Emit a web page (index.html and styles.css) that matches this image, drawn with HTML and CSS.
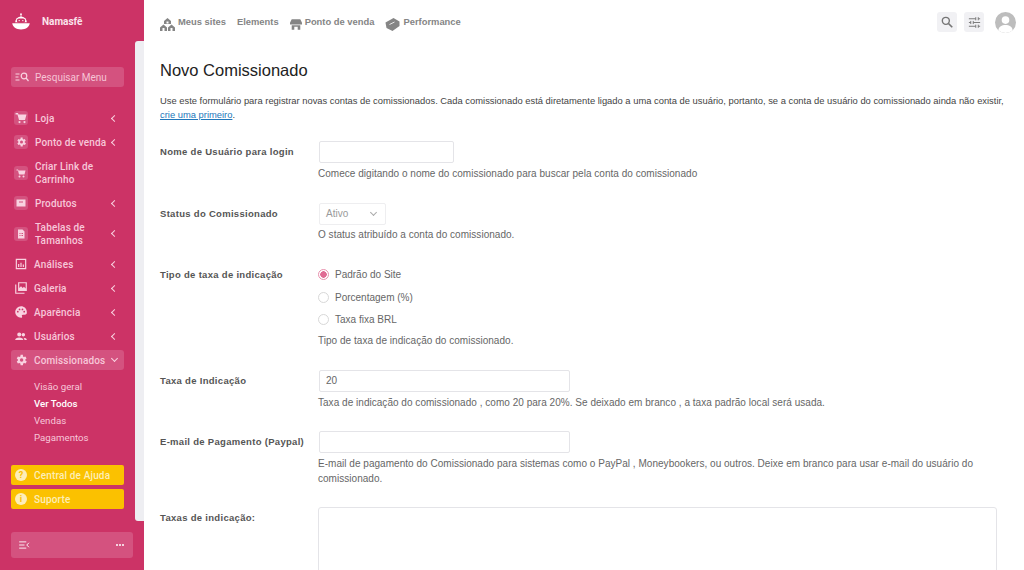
FILE: index.html
```html
<!DOCTYPE html>
<html lang="pt-BR">
<head>
    <meta charset="UTF-8">
    <title>Novo Comissionado</title>
    <link rel="stylesheet" href="styles.css">
</head>
<body>
<div class="app">
    <aside class="sidebar">
        <div class="side-col">
            <div class="brand">
                <svg class="brand-logo" viewBox="0 0 24 20"><circle cx="12" cy="1.200" r="1.100" fill="#fff"/><path d="M12 2v2.500" stroke="#fff" stroke-width="1"/><path d="M5 11a7 7 0 0 1 14 0z" fill="#fff"/><rect x="7" y="6.500" width="10" height="5" rx="2.500" fill="#cc3366"/><path d="M9 9h1.800M13.200 9H15" stroke="#fff" stroke-width="1"/><path d="M1.500 12h21c-.5 4-4.500 7.500-10.500 7.500S2 16 1.500 12z" fill="#fff"/></svg>
                <span>Namasfê</span>
            </div>
            <div class="side-search">
                <svg class="i-search" viewBox="0 0 14 10"><path d="M0 2h4M0 5h3M0 8h4" stroke="#f9d3e1" stroke-width="1"/><circle cx="8.500" cy="4" r="2.800" fill="none" stroke="#f9d3e1" stroke-width="1.200"/><path d="M10.500 6l2.500 3" stroke="#f9d3e1" stroke-width="1.200"/></svg>
                <span>Pesquisar Menu</span>
            </div>
            <nav class="menu">
                <a class="item"><span class="ico boxed"><svg viewBox="0 0 24 24"><path d="M1 2h5l1 3h16l-3 11H8L5 5H1zM9 18a2.200 2.200 0 1 1 0 4.400A2.200 2.200 0 0 1 9 18zm10 0a2.200 2.200 0 1 1 0 4.400 2.200 2.200 0 0 1 0-4.400z"/></svg></span><span class="txt">Loja</span><i class="chev"></i></a>
                <a class="item"><span class="ico boxed"><svg viewBox="0 0 24 24"><path d="M19.400 13a7.500 7.500 0 0 0 0-2l2.100-1.600-2-3.500-2.500 1a7.500 7.500 0 0 0-1.700-1L15.300 3.200h-4l-.4 2.700a7.500 7.500 0 0 0-1.700 1l-2.500-1-2 3.500L6.800 11a7.500 7.500 0 0 0 0 2l-2.100 1.600 2 3.500 2.500-1a7.500 7.500 0 0 0 1.700 1l.4 2.700h4l.4-2.700a7.500 7.500 0 0 0 1.700-1l2.500 1 2-3.500zM13 15a3 3 0 1 1 0-6 3 3 0 0 1 0 6z" fill-rule="evenodd"/></svg></span><span class="txt">Ponto de venda</span><i class="chev"></i></a>
                <a class="item"><span class="ico boxed"><svg viewBox="0 0 24 24"><path d="M3 5h3l1 2h14l-2 8H8L6 7H3zM9 17a2 2 0 1 1 0 4 2 2 0 0 1 0-4zm8 0a2 2 0 1 1 0 4 2 2 0 0 1 0-4z"/></svg></span><span class="txt">Criar Link de Carrinho</span></a>
                <a class="item"><span class="ico boxed"><svg viewBox="0 0 24 24"><path d="M3 5h18v14H3zM8 9v2h8V9z" fill-rule="evenodd"/></svg></span><span class="txt">Produtos</span><i class="chev"></i></a>
                <a class="item"><span class="ico boxed"><svg viewBox="0 0 24 24"><path d="M6 3h9l4 4v14H6zM9 10v2h2v-2zm4 0v2h3v-2zm-4 4v2h2v-2zm4 0v2h3v-2z" fill-rule="evenodd"/></svg></span><span class="txt">Tabelas de Tamanhos</span><i class="chev"></i></a>
                <a class="item"><span class="ico"><svg viewBox="0 0 24 24"><path d="M3 3h18v18H3zM5 5v14h14V5zM7 12h2v5H7zm4-2h2v7h-2zm4 3h2v4h-2z" fill-rule="evenodd"/></svg></span><span class="txt">Análises</span><i class="chev"></i></a>
                <a class="item"><span class="ico"><svg viewBox="0 0 24 24"><path d="M7 2h15v15H7zM9 4v8l3-3 3 3 2-2 3 3V4zM2 6h2v14h14v2H2z" fill-rule="evenodd"/></svg></span><span class="txt">Galeria</span><i class="chev"></i></a>
                <a class="item"><span class="ico"><svg viewBox="0 0 24 24"><path d="M12 2a10 10 0 1 0 0 20c2 0 2.500-1.500 1.700-2.700-.8-1.300 0-2.800 1.500-2.800H18a4 4 0 0 0 4-4.500C22 6 17.500 2 12 2zM6.500 13a1.500 1.500 0 1 1 0-3 1.500 1.500 0 0 1 0 3zm3-4a1.500 1.500 0 1 1 0-3 1.500 1.500 0 0 1 0 3zm5 0a1.500 1.500 0 1 1 0-3 1.500 1.500 0 0 1 0 3zm3 4a1.500 1.500 0 1 1 0-3 1.500 1.500 0 0 1 0 3z" fill-rule="evenodd"/></svg></span><span class="txt">Aparência</span><i class="chev"></i></a>
                <a class="item"><span class="ico"><svg viewBox="0 0 24 24"><path d="M9 6a3.500 3.500 0 1 1 0 7 3.500 3.500 0 0 1 0-7zm7 1a3 3 0 1 1 0 6 3 3 0 0 1 0-6zM2 19c0-3 3-4.500 7-4.500s7 1.500 7 4.500zm16 0c0-1.800-.7-3.200-2-4.200 3.500 0 6 1.300 6 4.200z"/></svg></span><span class="txt">Usuários</span><i class="chev"></i></a>
                <a class="item active"><span class="ico"><svg viewBox="0 0 24 24"><path d="M19.400 13a7.500 7.500 0 0 0 0-2l2.100-1.600-2-3.500-2.500 1a7.500 7.500 0 0 0-1.700-1L15.300 3.200h-4l-.4 2.700a7.500 7.500 0 0 0-1.700 1l-2.500-1-2 3.500L6.800 11a7.500 7.500 0 0 0 0 2l-2.100 1.600 2 3.500 2.500-1a7.500 7.500 0 0 0 1.700 1l.4 2.700h4l.4-2.700a7.500 7.500 0 0 0 1.700-1l2.500 1 2-3.500zM13 15a3 3 0 1 1 0-6 3 3 0 0 1 0 6z" fill-rule="evenodd"/></svg></span><span class="txt">Comissionados</span><i class="chev down"></i></a>
            </nav>
            <ul class="submenu">
                <li>Visão geral</li>
                <li class="current">Ver Todos</li>
                <li>Vendas</li>
                <li>Pagamentos</li>
            </ul>
            <div class="help-btns">
                <a class="yellow"><span class="dot">?</span>Central de Ajuda</a>
                <a class="yellow"><span class="dot">i</span>Suporte</a>
            </div>
            <div class="side-foot">
                <svg class="foot-ico" viewBox="0 0 12 9"><path d="M0 1h8M0 4.500h6M0 8h8" stroke="#fff" stroke-width="1"/><path d="M11 2L8.500 4.500 11 7" fill="none" stroke="#fff" stroke-width="1"/></svg>
                <span class="foot-dots"><b></b><b></b><b></b></span>
            </div>
        </div>
        <div class="side-scroll"></div>
    </aside>

    <main class="main">
        <header class="topbar">
            <a class="top-link"><svg class="top-ico" viewBox="0 0 15 13"><path d="M7.500 0L11 3v3H4V3zM3.500 6.500L7 9.500V13H0V9.500zM11.500 6.500L15 9.500V13H8V9.500z" fill="#858585"/><path d="M6.500 3.500h2v2h-2zM2.500 10h2v3h-2zM10.500 10h2v3h-2z" fill="#fff"/></svg>Meus sites</a>
            <a class="top-link">Elements</a>
            <a class="top-link"><svg class="top-ico small" viewBox="0 0 14 12"><path d="M2 0h10l2 4v2H0V4zM2 7h10v5H9V8.500H5V12H2z" fill="#858585"/></svg>Ponto de venda</a>
            <a class="top-link"><svg class="top-ico" viewBox="0 0 14 13"><path d="M0 4.500L8 0l6 3.500V8l-7 5-6-3z" fill="#858585"/><path d="M4 6.500l5-2.500" stroke="#fff" stroke-width=".8"/></svg>Performance</a>
            <div class="top-right">
                <span class="top-btn"><svg viewBox="0 0 24 24" width="14" height="14"><circle cx="10" cy="10" r="6" fill="none" stroke="#757575" stroke-width="2.400"/><path d="M14.500 14.500L21 21" stroke="#757575" stroke-width="2.800"/></svg></span>
                <span class="top-btn"><svg viewBox="0 0 24 24" width="15" height="15"><path d="M3 6h11M18 6h3M3 12h3M10 12h11M3 18h11M18 18h3M14 3.500v5M18 3.500v5M6 9.500v5M10 9.500v5M14 15.500v5M18 15.500v5" stroke="#757575" stroke-width="1.500" fill="none"/></svg></span>
                <span class="avatar"><svg viewBox="0 0 22 22" width="21" height="21"><circle cx="11" cy="11" r="11" fill="#bdbdbd"/><circle cx="11" cy="8.500" r="4" fill="#fff"/><path d="M3.500 19c.5-4 3.500-5.500 7.500-5.500s7 1.500 7.500 5.500a11 11 0 0 1-15 0z" fill="#fff"/></svg></span>
            </div>
        </header>

        <section class="content">
            <h1>Novo Comissionado</h1>
            <p class="intro">Use este formulário para registrar novas contas de comissionados. Cada comissionado está diretamente ligado a uma conta de usuário, portanto, se a conta de usuário do comissionado ainda não existir, <a>crie uma primeiro</a>.</p>

            <div class="row row-user">
                <label>Nome de Usuário para login</label>
                <div class="field">
                    <input class="inp w-small" type="text">
                    <p class="hint">Comece digitando o nome do comissionado para buscar pela conta do comissionado</p>
                </div>
            </div>
            <div class="row row-status">
                <label>Status do Comissionado</label>
                <div class="field">
                    <div class="fake-select">Ativo<i class="sel-chev"></i></div>
                    <p class="hint">O status atribuído a conta do comissionado.</p>
                </div>
            </div>
            <div class="row row-type">
                <label>Tipo de taxa de indicação</label>
                <div class="field">
                    <div class="radio"><span class="rd on"></span>Padrão do Site</div>
                    <div class="radio"><span class="rd"></span>Porcentagem (%)</div>
                    <div class="radio"><span class="rd"></span>Taxa fixa BRL</div>
                    <p class="hint hint-type">Tipo de taxa de indicação do comissionado.</p>
                </div>
            </div>
            <div class="row row-rate">
                <label>Taxa de Indicação</label>
                <div class="field">
                    <input class="inp w-mid" type="text" value="20">
                    <p class="hint">Taxa de indicação do comissionado , como 20 para 20%. Se deixado em branco , a taxa padrão local será usada.</p>
                </div>
            </div>
            <div class="row row-mail">
                <label>E-mail de Pagamento (Paypal)</label>
                <div class="field">
                    <input class="inp w-mid" type="text">
                    <p class="hint">E-mail de pagamento do Comissionado para sistemas como o PayPal , Moneybookers, ou outros. Deixe em branco para usar e-mail do usuário do comissionado.</p>
                </div>
            </div>
            <div class="row row-notes">
                <label>Taxas de indicação:</label>
                <div class="field">
                    <textarea class="area"></textarea>
                </div>
            </div>
        </section>
    </main>
</div>
</body>
</html>
```

FILE: styles.css
```css
* {
    box-sizing: border-box;
}
html, body {
    margin: 0;
    height: 570px;
    overflow: hidden;
}
body {
    font-family: "Liberation Sans", Arial, sans-serif;
    background: #fff;
    color: #444;
}
.app {
    display: flex;
    height: 570px;
    overflow: hidden;
}

/* sidebar */
.sidebar {
    display: flex;
    flex: 0 0 144px;
    width: 144px;
    height: 570px;
    background: #cc3366;
    font-family: Roboto, "Liberation Sans", sans-serif;
}
.side-col {
    width: 135px;
    padding-left: 11px;
    display: flex;
    flex-direction: column;
}
.side-scroll {
    width: 9px;
    margin: 41px 0 49px;
    background: #eeeef2;
    border-radius: 3px 0 0 3px;
}
.brand {
    display: flex;
    align-items: center;
    height: 20px;
    margin-top: 11px;
    color: #fbe3ec;
    font-size: 10px;
    font-weight: 700;
}
.brand-logo {
    width: 20px;
    height: 19px;
    margin-right: 11px;
}
.side-search {
    display: flex;
    align-items: center;
    width: 113px;
    height: 20px;
    margin-top: 36px;
    padding-left: 4px;
    background: #d4527f;
    border-radius: 3px;
    color: #f6c4d6;
    font-size: 10px;
}
.i-search {
    width: 15px;
    height: 10px;
    margin-right: 5px;
}
.menu {
    display: flex;
    flex-direction: column;
    gap: 4px;
    margin-top: 21px;
}
.item {
    display: flex;
    align-items: center;
    width: 113px;
    padding: 3.500px 0;
    border-radius: 3px;
    color: #f7c7d9;
    font-size: 10px;
    font-weight: 500;
    letter-spacing: .15px;
    line-height: 13px;
}
.item.active {
    background: #d4527f;
}
.ico {
    flex: 0 0 23px;
    display: flex;
    align-items: center;
    height: 13px;
    padding-left: 3px;
}
.ico svg {
    width: 14px;
    height: 14px;
    fill: #f9d3e1;
}
.ico.boxed {
    flex-basis: 24px;
}
.ico.boxed svg {
    padding: 1px;
    background: #d4527f;
    border-radius: 3px;
}
.txt {
    flex: 1;
}
.chev {
    flex: 0 0 auto;
    width: 5px;
    height: 5px;
    margin-right: 7px;
    border-left: 1.500px solid #f9d3e1;
    border-bottom: 1.500px solid #f9d3e1;
    transform: rotate(45deg);
}
.chev.down {
    transform: rotate(-45deg);
    margin-top: -3px;
}
.submenu {
    list-style: none;
    margin: 8px 0 0;
    padding: 0 0 0 23px;
    color: #f7c7d9;
    font-size: 9.700px;
    line-height: 17px;
}
.submenu .current {
    color: #fff;
    font-weight: 500;
}
.help-btns {
    display: flex;
    flex-direction: column;
    gap: 4px;
    margin-top: 19px;
}
.yellow {
    display: flex;
    align-items: center;
    width: 113px;
    height: 20px;
    padding-left: 4px;
    background: #fbc100;
    border-radius: 2px;
    color: #fdeeb8;
    font-size: 10px;
    font-weight: 500;
    letter-spacing: .15px;
}
.dot {
    width: 12px;
    height: 12px;
    margin-right: 7px;
    border-radius: 50%;
    background: #fdeeb8;
    color: #fbc100;
    font-size: 9px;
    font-weight: 700;
    line-height: 12px;
    text-align: center;
}
.side-foot {
    display: flex;
    align-items: center;
    justify-content: space-between;
    width: 122px;
    height: 26px;
    margin-top: 23px;
    padding: 0 9px 0 8px;
    background: #d4527f;
    border-radius: 3px;
}
.foot-ico {
    width: 11px;
    height: 8px;
}
.foot-dots {
    display: flex;
    gap: 1px;
}
.foot-dots b {
    width: 2px;
    height: 2px;
    border-radius: 50%;
    background: #fff;
}

/* top bar */
.main {
    flex: 1;
    min-width: 0;
}
.topbar {
    display: flex;
    align-items: center;
    height: 44px;
    padding: 0 8px 0 16px;
}
.top-link {
    display: flex;
    align-items: center;
    margin: 0 11px 2px 0;
    color: #858585;
    font-size: 9.400px;
    font-weight: 700;
}
.top-ico {
    width: 15px;
    height: 13px;
    margin: 6px 3px 0 0;
}
.top-ico.small {
    width: 12px;
    height: 11px;
    margin-right: 3px;
}
.top-right {
    display: flex;
    align-items: center;
    gap: 7px;
    margin-left: auto;
}
.top-btn {
    display: flex;
    align-items: center;
    justify-content: center;
    width: 20px;
    height: 20px;
    background: #f1f1f4;
    border-radius: 3px;
}
.avatar {
    display: block;
    width: 21px;
    height: 21px;
    margin-left: 4px;
}

/* form */
.content {
    padding: 0 16px;
}
h1 {
    margin: 15px 0 0;
    color: #222;
    font-size: 16.500px;
    font-weight: 400;
    line-height: 22px;
}
.intro {
    margin: 13px 0 0;
    color: #444;
    font-size: 9.400px;
    line-height: 14px;
}
.intro a {
    color: #2277bb;
    text-decoration: underline;
}
.row {
    display: flex;
}
.row label {
    flex: 0 0 158px;
    color: #555;
    font-size: 9.500px;
    font-weight: 700;
    letter-spacing: .3px;
    line-height: 22px;
}
.field {
    flex: 1;
    min-width: 0;
}
.hint {
    margin: 0;
    color: #666;
    font-size: 10px;
    letter-spacing: .03px;
    line-height: 15px;
}
.inp {
    display: block;
    height: 22px;
    margin-left: 1px;
    padding: 0 6px;
    border: 1px solid #e4e4e8;
    border-radius: 2px;
    background: #fff;
    color: #666;
    font: 10px "Liberation Sans", Arial, sans-serif;
    outline: none;
}
.w-small {
    width: 135px;
}
.w-mid {
    width: 251px;
}
.row-user {
    margin-top: 18.500px;
}
.row-user .hint {
    margin-top: 3px;
}
.row-status {
    margin-top: 22px;
}
.fake-select {
    display: flex;
    align-items: center;
    justify-content: space-between;
    width: 67px;
    height: 22px;
    margin-left: 1px;
    padding: 0 6px;
    border: 1px solid #eeeef0;
    border-radius: 2px;
    color: #9a9a9a;
    font-size: 10px;
}
.sel-chev {
    width: 5px;
    height: 5px;
    margin: -3px 3px 0 0;
    border-right: 1px solid #aaa;
    border-bottom: 1px solid #aaa;
    transform: rotate(45deg);
}
.row-status .hint {
    margin-top: 2px;
}
.row-type {
    margin-top: 22px;
}
.radio {
    display: flex;
    align-items: center;
    height: 22.500px;
    color: #666;
    font-size: 10px;
}
.rd {
    width: 11px;
    height: 11px;
    margin-right: 6px;
    border: 1px solid #d8d8d8;
    border-radius: 50%;
    background: #fff;
}
.rd.on {
    border-color: #e890ad;
    background: radial-gradient(circle, #e06a93 0 3px, #fff 3.500px);
}
.hint-type {
    margin-top: 1.500px;
}
.row-rate {
    margin-top: 22px;
}
.row-rate .hint {
    margin-top: 3px;
}
.row-mail {
    margin-top: 21px;
}
.row-mail .hint {
    margin-top: 3px;
}
.row-notes {
    margin-top: 21px;
}
.area {
    display: block;
    width: 679px;
    height: 200px;
    border: 1px solid #e4e4e8;
    border-radius: 3px;
    resize: none;
    outline: none;
}
```
